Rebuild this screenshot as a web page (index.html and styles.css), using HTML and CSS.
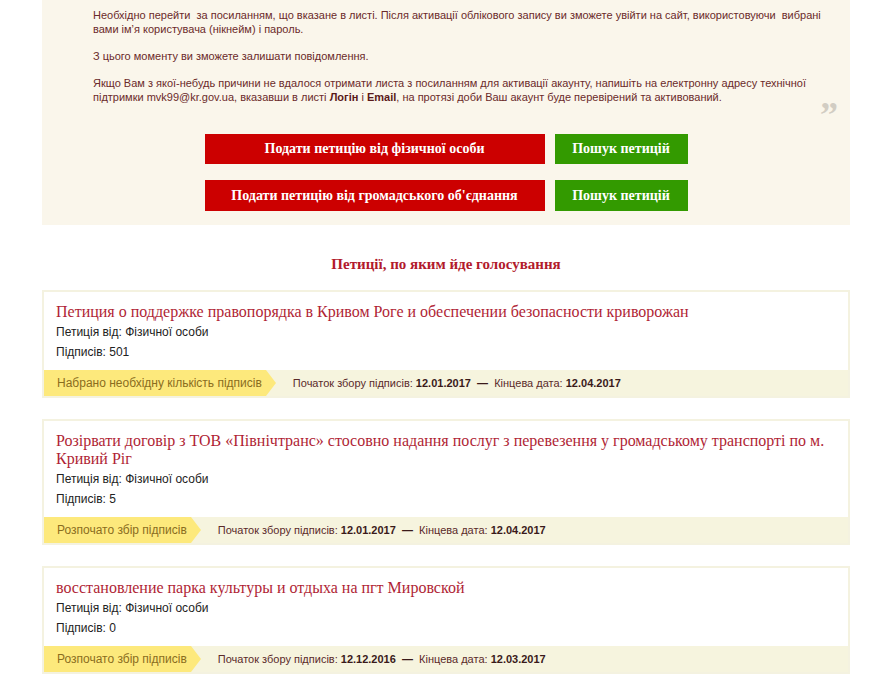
FILE: index.html
```html
<!DOCTYPE html>
<html lang="uk">
<head>
<meta charset="utf-8">
<title>Петиції</title>
<link rel="stylesheet" href="styles.css">
</head>
<body>
<div class="page">
  <section class="info">
    <p>Необхідно перейти&nbsp; за посиланням, що вказане в листі. Після активації облікового запису ви зможете увійти на сайт, використовуючи&nbsp; вибрані вами імʼя користувача (нікнейм) і пароль.</p>
    <p>З цього моменту ви зможете залишати повідомлення.</p>
    <p>Якщо Вам з якої-небудь причини не вдалося отримати листа з посиланням для активації акаунту, напишіть на електронну адресу технічної підтримки mvk99@kr.gov.ua, вказавши в листі <b>Логін</b> і <b>Email</b>, на протязі доби Ваш акаунт буде перевірений та активований.</p>
    <span class="quote">”</span>
    <div class="actions">
      <div class="row">
        <a class="btn btn-red">Подати петицію від фізичної особи</a>
        <a class="btn btn-green">Пошук петицій</a>
      </div>
      <div class="row">
        <a class="btn btn-red">Подати петицію від громадського об'єднання</a>
        <a class="btn btn-green">Пошук петицій</a>
      </div>
    </div>
  </section>

  <h2 class="heading">Петиції, по яким йде голосування</h2>

  <article class="card">
    <div class="card-body">
      <h3 class="title">Петиция о поддержке правопорядка в Кривом Роге и обеспечении безопасности криворожан</h3>
      <div class="meta">Петиція від: Фізичної особи</div>
      <div class="meta">Підписів: 501</div>
    </div>
    <div class="card-foot">
      <span class="status">Набрано необхідну кількість підписів</span>
      <span class="dates">Початок збору підписів: <b>12.01.2017</b> &nbsp;<b>—</b>&nbsp; Кінцева дата: <b>12.04.2017</b></span>
    </div>
  </article>

  <article class="card">
    <div class="card-body">
      <h3 class="title">Розірвати договір з ТОВ «Північтранс» стосовно надання послуг з перевезення у громадському транспорті по м. Кривий Ріг</h3>
      <div class="meta">Петиція від: Фізичної особи</div>
      <div class="meta">Підписів: 5</div>
    </div>
    <div class="card-foot">
      <span class="status">Розпочато збір підписів</span>
      <span class="dates">Початок збору підписів: <b>12.01.2017</b> &nbsp;<b>—</b>&nbsp; Кінцева дата: <b>12.04.2017</b></span>
    </div>
  </article>

  <article class="card">
    <div class="card-body">
      <h3 class="title">восстановление парка культуры и отдыха на пгт Мировской</h3>
      <div class="meta">Петиція від: Фізичної особи</div>
      <div class="meta">Підписів: 0</div>
    </div>
    <div class="card-foot">
      <span class="status">Розпочато збір підписів</span>
      <span class="dates">Початок збору підписів: <b>12.12.2016</b> &nbsp;<b>—</b>&nbsp; Кінцева дата: <b>12.03.2017</b></span>
    </div>
  </article>
</div>
</body>
</html>
```

FILE: styles.css
```css
* { box-sizing: border-box; }
html, body { margin: 0; padding: 0; background: #fff; }
body { font-family: "Liberation Sans", Arial, sans-serif; }

.page {
  width: 808px;
  margin-left: 42px;
}

.info {
  position: relative;
  background: #faf6eb;
  padding: 8px 20px 14px 51px;
}
.info p {
  margin: 0 0 13px;
  font-size: 11px;
  line-height: 14px;
  color: #6b2a2a;
}
.info p b { color: #5a1a1a; }
.quote {
  position: absolute;
  right: 10px;
  top: 98px;
  font-family: "Liberation Serif", serif;
  font-weight: bold;
  font-size: 36px;
  letter-spacing: 2px;
  color: #d2cdc3;
  line-height: 34px;
}

.actions {
  display: flex;
  flex-direction: column;
  align-items: center;
  gap: 16px;
  margin-top: 30px;
  margin-left: -51px;
  margin-right: -20px;
}
.row {
  display: flex;
  gap: 10px;
}
.btn {
  display: flex;
  align-items: center;
  justify-content: center;
  height: 30px;
  color: #fff;
  font-family: "Liberation Serif", "Times New Roman", serif;
  font-weight: bold;
  font-size: 14px;
}
.btn-red { width: 340px; background: #cc0000; }
.btn-green { width: 133px; background: #339a00; }
.row + .row .btn { height: 31px; }

.heading {
  margin: 30px 0 17px;
  text-align: center;
  font-family: "Liberation Serif", "Times New Roman", serif;
  font-weight: bold;
  font-size: 15px;
  line-height: 18px;
  color: #b21a2c;
}

.card {
  border: 2px solid #f4f2e0;
  margin-bottom: 21px;
  background: #fff;
}
.card-body {
  padding: 11px 12px 8px 12px;
}
.title {
  margin: 0 0 1px;
  font-family: "Liberation Serif", "Times New Roman", serif;
  font-weight: normal;
  font-size: 16px;
  line-height: 18px;
  color: #b01f35;
}
.meta {
  font-size: 12px;
  line-height: 20px;
  color: #222;
}

.card-foot {
  display: flex;
  align-items: center;
  height: 26px;
  background: #f6f4de;
}
.status {
  position: relative;
  display: flex;
  align-items: center;
  height: 26px;
  padding: 0 4px 0 13px;
  background: #fde97c;
  font-size: 12px;
  color: #8a6d1e;
  margin-right: 27px;
}
.status::after {
  content: "";
  position: absolute;
  left: 100%;
  top: 0;
  border-top: 13px solid transparent;
  border-bottom: 13px solid transparent;
  border-left: 10px solid #fde97c;
}
.dates {
  font-size: 11px;
  color: #5a2a2a;
}
.dates b { color: #3a1a1a; }
```
